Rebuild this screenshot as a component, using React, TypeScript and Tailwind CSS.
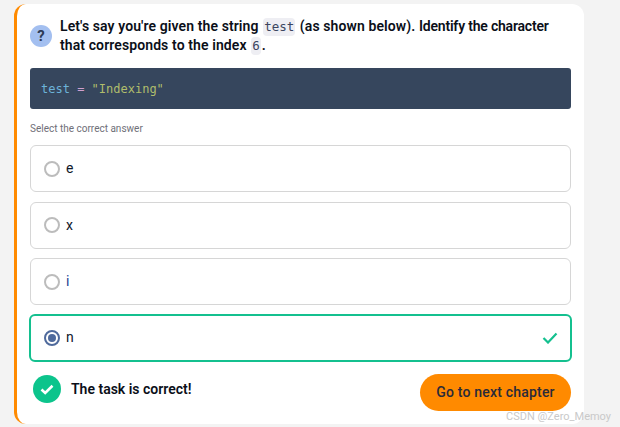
import React from 'react';

const options = ['e', 'x', 'i', 'n'];
const font = "font-['Roboto',sans-serif]";
const inlineCode = "inline-block align-baseline leading-[18px] font-['DejaVu_Sans_Mono',monospace] font-normal text-[12.5px] bg-[#eeeef3] text-[#3b4560] rounded px-[1px] mx-[1px] tracking-normal";

function Radio({ checked }: { checked: boolean }) {
    if (checked) {
        return (
            <span className="w-4 h-4 rounded-full border-2 border-[#4f6a9c] flex items-center justify-center">
                <span className="w-2 h-2 rounded-full bg-[#4f6a9c]" />
            </span>
        );
    }
    return <span className="w-4 h-4 rounded-full border-2 border-[#bcbcbc] bg-white" />;
}

export default function App() {
    return (
        <div className={`w-[620px] h-[427px] bg-[#f3f3f3] overflow-hidden pt-1 pl-[14px] ${font}`}>
            <div className="w-[570px] h-[420px] bg-white rounded-xl border-l-[3px] border-[#ff8a00] pl-[13px] pr-[13px] pt-[13px]">
                {/* Question */}
                <div className="flex items-center gap-[8px] h-[38px]">
                    <div className="w-[22px] h-[22px] shrink-0 rounded-full bg-[#a3bff0] flex items-center justify-center text-[#2d3a55] text-[15px] font-bold">
                        ?
                    </div>
                    <div className="text-[14px] leading-[19px] font-semibold text-[#0b0f19] tracking-[0.1px] whitespace-nowrap">
                        <div>
                            Let's say you're given the string <code className={inlineCode}>test</code> (as shown below). <span className="tracking-[-0.2px]">Identify the character</span>
                        </div>
                        <div>
                            that corresponds to the index <code className={inlineCode}>6</code>.
                        </div>
                    </div>
                </div>

                {/* Code block */}
                <div className="mt-[13px] h-[41px] bg-[#36465d] rounded-[3px] flex items-center pl-[11px] font-['DejaVu_Sans_Mono',monospace] text-[12px] whitespace-pre">
                    <span className="text-[#6db3d8]">test</span>
                    <span className="text-[#d0a0d0]"> = </span>
                    <span className="text-[#b0bd6c]">"Indexing"</span>
                </div>

                <div className="mt-[13px] h-[12px] flex items-center text-[10px] text-[#6f6f78]">Select the correct answer</div>

                {/* Answers */}
                <div className="mt-[11px] flex flex-col gap-[9.5px]">
                    {options.map((o) => {
                        const correct = o === 'n';
                        return (
                            <div
                                key={o}
                                className={
                                    correct
                                        ? 'h-[48px] -mx-[1px] -mt-[1px] rounded-md border-2 border-[#14c08f] flex items-center pl-[13px] pr-[12px] gap-[6px]'
                                        : 'h-[47px] rounded-md border border-[#d6d6d6] flex items-center pl-[13px] gap-[6px]'
                                }
                            >
                                <Radio checked={correct} />
                                <span className={o === 'i' ? 'text-[14px] text-[#1d3f8f]' : 'text-[14px] text-[#10182b]'}>{o}</span>
                                {correct && (
                                    <svg className="ml-auto" width="16" height="12" viewBox="0 0 16 12" fill="none">
                                        <path d="M1.5 6 L6 10.5 L14.5 1.5" stroke="#14c08f" strokeWidth="2.2" />
                                    </svg>
                                )}
                            </div>
                        );
                    })}
                </div>

                {/* Result */}
                <div className="mt-[12px] flex items-center justify-between">
                    <div className="flex items-center gap-[10px] pl-[3px] -mt-[6px]">
                        <div className="w-[28px] h-[28px] rounded-full bg-[#0cc48c] flex items-center justify-center">
                            <svg width="14" height="11" viewBox="0 0 14 11" fill="none">
                                <path d="M1.5 5.5 L5.2 9 L12.5 1.8" stroke="white" strokeWidth="2.6" />
                            </svg>
                        </div>
                        <span className="text-[14px] font-semibold text-[#0b0f19]">The task is correct!</span>
                    </div>
                    <button className="w-[151px] h-[37px] rounded-full bg-[#ff8a00] text-[14px] text-[#2a2a3a] font-medium tracking-[0.2px]">
                        Go to next chapter
                    </button>
                </div>
            </div>

            {/* Watermark */}
            <div className="absolute left-[506px] top-[409px] text-[11px] text-[#c9c9c9] whitespace-nowrap">CSDN @Zero_Memoy</div>
        </div>
    );
}
